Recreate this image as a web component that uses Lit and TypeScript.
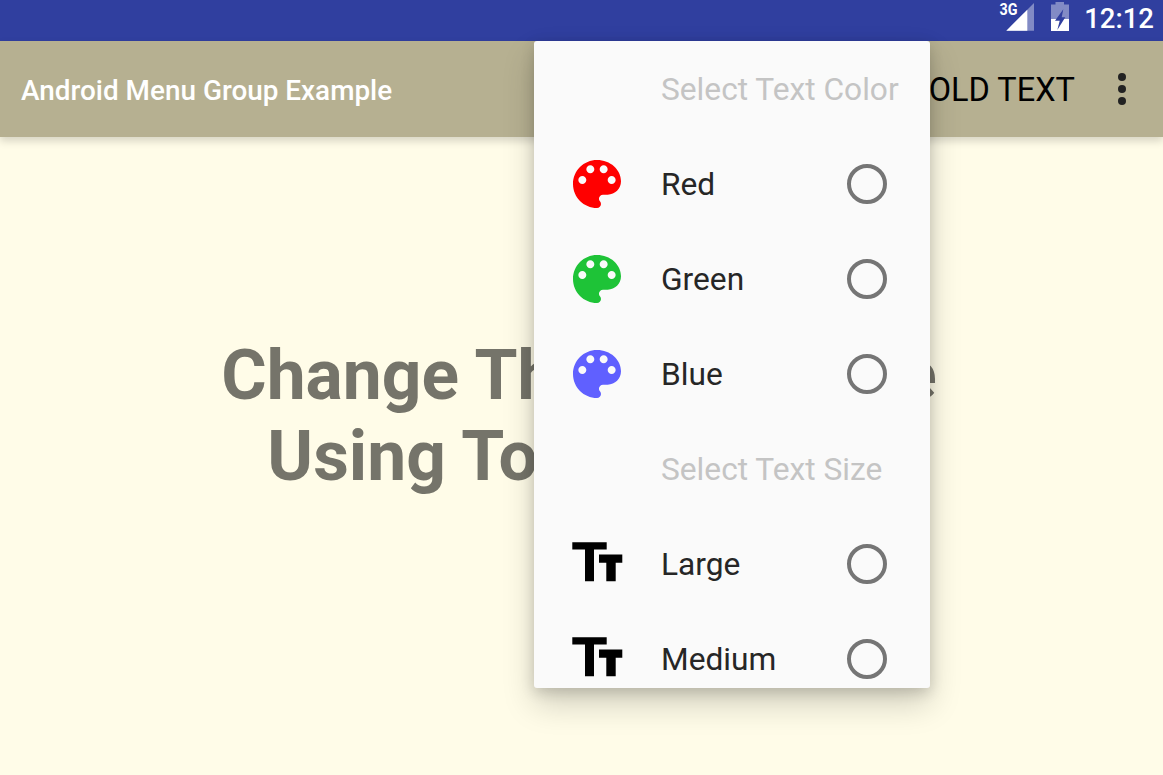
import { LitElement, html, css } from "lit";
import { customElement } from "lit/decorators.js";

const PALETTE =
  "M12 3c-4.97 0-9 4.03-9 9s4.03 9 9 9c.83 0 1.5-.67 1.5-1.5 0-.39-.15-.74-.39-1.01-.23-.26-.38-.61-.38-.99 0-.83.67-1.5 1.5-1.5H16c2.76 0 5-2.24 5-5 0-4.42-4.03-8-9-8zm-5.5 9c-.83 0-1.5-.67-1.5-1.5S5.67 9 6.5 9 8 9.67 8 10.5 7.33 12 6.5 12zm3-4C8.67 8 8 7.33 8 6.5S8.67 5 9.5 5s1.5.67 1.5 1.5S10.33 8 9.5 8zm5 0c-.83 0-1.5-.67-1.5-1.5S13.67 5 14.5 5s1.5.67 1.5 1.5S15.33 8 14.5 8zm3 4c-.83 0-1.5-.67-1.5-1.5S16.67 9 17.5 9s1.5.67 1.5 1.5-.67 1.5-1.5 1.5z";

const paletteIcon = (color: string) => html`<svg class="icon" viewBox="0 0 24 24">
  <path fill=${color} d=${PALETTE}></path>
</svg>`;

const sizeIcon = html`<svg class="icon" viewBox="0 0 64 64">
  <path
    fill="#000"
    d="M7.3 10.2H41.7V17.5H29V49.2H20V17.5H7.3ZM34 22.5H57.3V30.8H50.7V49.2H41.3V30.8H34Z"
  ></path>
</svg>`;

const items: { kind: "head" | "color" | "size"; label: string; color?: string }[] = [
  { kind: "head", label: "Select Text Color" },
  { kind: "color", label: "Red", color: "#ff0000" },
  { kind: "color", label: "Green", color: "#1ec337" },
  { kind: "color", label: "Blue", color: "#6060ff" },
  { kind: "head", label: "Select Text Size" },
  { kind: "size", label: "Large" },
  { kind: "size", label: "Medium" },
];

@customElement("app-root")
export class AppRoot extends LitElement {
  static styles = css`
    :host {
      display: block;
      position: relative;
      width: 1163px;
      height: 775px;
      overflow: hidden;
      font-family: Roboto, "Liberation Sans", sans-serif;
      background: #fffce8;
    }
    .status {
      height: 41px;
      background: #303f9f;
      display: flex;
      align-items: flex-start;
      justify-content: flex-end;
      padding-right: 9px;
      box-sizing: border-box;
      color: #fff;
    }
    .signal {
      width: 36px;
      height: 32px;
      margin-right: 16px;
      display: block;
    }
    .battery {
      width: 18px;
      height: 29px;
      margin: 2px 15px 0 0;
      display: block;
    }
    .clock {
      font-size: 27.5px;
      font-weight: 500;
      line-height: 37px;
    }
    .toolbar {
      position: relative;
      height: 96px;
      background: #b6b091;
      box-shadow: 0 4px 8px rgba(0, 0, 0, 0.16);
      display: flex;
      align-items: center;
      padding: 0 21px;
      box-sizing: border-box;
    }
    .title {
      flex: 1;
      color: #fff;
      font-size: 27.9px;
      font-weight: 500;
      padding-top: 3px;
    }
    .action {
      color: #000;
      font-size: 32.5px;
      font-weight: 400;
      margin-right: 43px;
      padding-top: 2px;
      white-space: nowrap;
    }
    .overflow {
      width: 10px;
      display: flex;
      flex-direction: column;
      gap: 4px;
      margin-right: 14px;
    }
    .overflow i {
      width: 8px;
      height: 8px;
      border-radius: 50%;
      background: #222;
    }
    .content {
      height: 638px;
      display: flex;
      flex-direction: column;
      align-items: center;
      padding: 198px 5px 0 0;
      box-sizing: border-box;
      text-align: center;
      color: #75746a;
      font-size: 69.5px;
      font-weight: 700;
      line-height: 81px;
    }
    .menu {
      position: absolute;
      left: 534px;
      top: 41px;
      width: 396px;
      height: 647px;
      overflow: hidden;
      background: #fafafa;
      border-radius: 3px;
      box-shadow: 0 16px 32px rgba(0, 0, 0, 0.18), 0 4px 14px rgba(0, 0, 0, 0.16);
    }
    .row {
      height: 95px;
      display: grid;
      grid-template-columns: 64px 1fr 40px;
      align-items: center;
      padding: 0 43px 0 31px;
      column-gap: 32px;
      color: #262626;
      font-size: 31.7px;
    }
    .row.head {
      color: #c4c4c4;
    }
    .label {
      grid-column: 2;
      white-space: nowrap;
      padding-top: 2px;
    }
    .icon {
      width: 64px;
      height: 64px;
      display: block;
    }
    .radio {
      width: 40px;
      height: 40px;
      border: 4px solid #757575;
      border-radius: 50%;
      box-sizing: border-box;
    }
  `;

  render() {
    return html`
      <div class="status">
        <svg class="signal" viewBox="0 0 36 32">
          <text x="0.5" y="15" fill="#fff" font-family="Roboto" font-weight="700" font-size="16.5" textLength="18" lengthAdjust="spacingAndGlyphs">3G</text>
          <path fill="#fff" fill-opacity="0.4" d="M7.3 30.7 35 3V30.7Z"></path>
          <path fill="#fff" d="M7.3 30.7 28.3 9.7V30.7Z"></path>
        </svg>
        <svg class="battery" viewBox="0 0 18 29">
          <path fill="#fff" fill-opacity="0.4" d="M4.5 0H13V2.5H18V17H0V2.5H4.5Z"></path>
          <path fill="#fff" d="M0 17H18V29H0Z"></path>
          <path fill="#303f9f" d="M12.3 7.3 4 18.7H8.7L6.3 28 14.3 15.3H10.7Z"></path>
        </svg>
        <span class="clock">12:12</span>
      </div>
      <div class="toolbar">
        <span class="title">Android Menu Group Example</span>
        <span class="action">BOLD TEXT</span>
        <div class="overflow"><i></i><i></i><i></i></div>
      </div>
      <div class="content">
        <div>Change This Text Style</div>
        <div>Using Toolbar Menu</div>
      </div>
      <div class="menu">
        ${items.map(
          (it) => html`<div class="row ${it.kind === "head" ? "head" : ""}">
            ${it.kind === "color" ? paletteIcon(it.color!) : it.kind === "size" ? sizeIcon : ""}
            <span class="label">${it.label}</span>
            ${it.kind === "head" ? "" : html`<div class="radio"></div>`}
          </div>`
        )}
      </div>
    `;
  }
}
